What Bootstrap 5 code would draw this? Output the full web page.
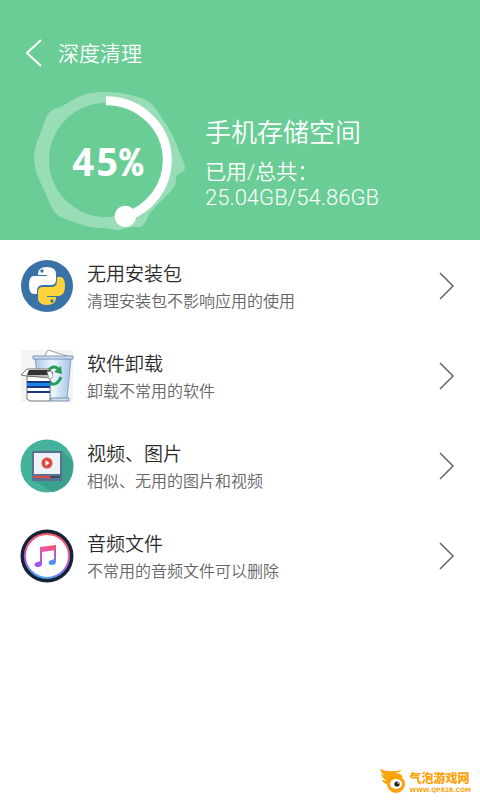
<!DOCTYPE html>
<html lang="zh-CN">
<head>
<meta charset="utf-8">
<meta name="viewport" content="width=device-width, initial-scale=1">
<title>深度清理</title>
<link href="https://cdn.jsdelivr.net/npm/bootstrap@5.3.0/dist/css/bootstrap.min.css" rel="stylesheet">
<style>
body{font-family:Roboto,"Noto Sans CJK SC",sans-serif;background:#fff;color:#2a2a2a}
.hero{background:#69cd95;color:#fff;padding:32px 20px 0}
.back-btn{width:26px;height:40px;color:#fff}
.page-title{font-size:21px;line-height:40px;font-weight:350;padding:2px 0 0 12px}
.gauge{width:180px;height:160px;margin-top:6px}
.gauge text{font:700 120px "Noto Sans Mono","DejaVu Sans Mono",monospace}
.storage{padding:40px 0 0 5px;font-weight:350}
.storage h2{font-size:26px;line-height:38px;font-weight:350}
.storage p{font-size:21px;line-height:25px}
.storage .amount{font-size:22px;font-weight:300}
.tools{padding-top:1px}
.tool{height:90px;padding:0 25px 0 20px;color:#2a2a2a}
.tool-icon{width:54px;height:54px}
.tool-text{padding:4px 0 0 13px}
.tool-name{font-size:19px;line-height:27px;font-weight:350}
.tool-note{font-size:16px;line-height:27px;color:#666;font-weight:350}
.brand{padding:0 9px 6px 0;color:#fba40a}
.brand-name{font:900 12px/16px "Noto Sans CJK SC",sans-serif}
.brand-url{font:700 6px/8px "DejaVu Sans",sans-serif}
</style>
</head>
<body class="d-flex flex-column min-vh-100">
<header class="hero">
  <div class="d-flex align-items-center">
    <button class="back-btn btn p-0 border-0 d-flex align-items-center justify-content-end" type="button" aria-label="返回">
      <svg width="20" height="28" viewBox="0 0 20 28" fill="none" stroke="currentColor" stroke-width="2"><path d="M15 1 1 14 15 27"/></svg>
    </button>
    <h1 class="page-title mb-0">深度清理</h1>
  </div>
  <div class="d-flex">
    <svg class="gauge flex-shrink-0" viewBox="0 0 540 480" role="img" aria-label="45%">
      <path fill="#fff" fill-opacity=".32" fill-rule="evenodd" d="M255 36C300 36 350 46 378 60C408 76 420 107 434 127C459 164 470 190 477 215C484 231 495 249 495 265C492 280 469 281 467 293C466 303 471 308 463 320C446 344 414 367 390 400C377 420 373 443 355 441C335 437 315 447 294 450C274 450 266 443 240 444C204 445 176 430 144 420C121 412 108 405 98 387C86 365 75 336 65 315C51 289 43 259 42 232C43 204 51 185 59 165C71 137 74 106 94 92C109 83 124 82 137 73C177 45 207 37 255 36ZM258 69A171 171 0 1 0 258 411A171 171 0 1 0 258 69Z"/>
      <path d="M258 62A184 179 0 0 1 442 241A184 179 0 0 1 316 411" fill="none" stroke="#fff" stroke-width="27"/>
      <circle cx="316" cy="409" r="32" fill="#fff"/>
      <text x="262" y="287" text-anchor="middle" fill="#fff">45%</text>
    </svg>
    <div class="storage">
      <h2 class="mb-2">手机存储空间</h2>
      <p class="mb-0">已用/总共：<br><span class="amount">25.04GB/54.86GB</span></p>
    </div>
  </div>
</header>
<main class="tools flex-grow-1">
  <a href="#apk" class="tool d-flex align-items-center text-decoration-none">
    <svg class="tool-icon flex-shrink-0" viewBox="0 0 54 54">
      <circle cx="27" cy="27" r="26" fill="#3872a6"/>
      <path fill="#fff" d="M18 15q0-7 9-7t9 7v6q0 5-5 5h-8q-6 0-6 6v3h-3q-5 0-5-9t5-9h13v-1h-9z"/>
      <path fill="#ffd43b" d="M36 39q0 7-9 7t-9-7v-6q0-5 5-5h8q6 0 6-6v-4h3q5 0 5 9t-6 10H27v1h9z"/>
      <circle cx="22" cy="12" r="1.700" fill="#3872a6"/><circle cx="32" cy="42" r="1.700" fill="#3872a6"/>
    </svg>
    <span class="d-flex flex-column flex-grow-1 tool-text"><span class="tool-name">无用安装包</span><span class="tool-note">清理安装包不影响应用的使用</span></span>
    <svg width="16" height="28" viewBox="0 0 16 28" fill="none" stroke="#666" stroke-width="1.500" aria-hidden="true"><path d="M1 1 14 14 1 27"/></svg>
  </a>
  <a href="#uninstall" class="tool d-flex align-items-center text-decoration-none">
    <svg class="tool-icon flex-shrink-0" viewBox="0 0 54 54">
      <defs><linearGradient id="bin"><stop stop-color="#a9c9e6"/><stop offset=".5" stop-color="#edf6fd"/><stop offset="1" stop-color="#a5c3e6"/></linearGradient></defs>
      <path fill="#f4f4f4" d="M1 1h52v52H1z"/>
      <path fill="#fff" stroke="#888" stroke-width=".8" d="m24 8 4-7 19 6-2 4z"/>
      <path fill="url(#bin)" stroke="#7697c2" stroke-width=".8" d="M15 9h36l-4 41H20z"/>
      <path fill="#cbdff1" stroke="#637ea6" stroke-width=".8" d="M13 7h40v3H13zM31 49h18v3H31z"/>
      <path fill="none" stroke="#299d5b" stroke-width="3" d="M27 23q7-9 12-2M41 28q-4 10-12 6"/>
      <path fill="#299d5b" d="m34 23 8 2-1-8zm-6 6-1 9 7-3z"/>
      <path fill="#fff" stroke="#555" stroke-width=".8" d="m7 27-6-1 6-6h22l4 4-3 5zM7 27h23v25H10l-3-2z"/>
      <path fill="#333" d="m7 26 2-5h21l-2 5z"/>
      <path fill="#193a82" d="M7 32h23v7H7zM7 42h23v2H7z"/><path fill="#1785e9" d="M7 34h23v3H7z"/>
      <path fill="#fff" stroke="#777" stroke-width=".6" d="m27 22 5 1 1 5-4 2z"/>
    </svg>
    <span class="d-flex flex-column flex-grow-1 tool-text"><span class="tool-name">软件卸载</span><span class="tool-note">卸载不常用的软件</span></span>
    <svg width="16" height="28" viewBox="0 0 16 28" fill="none" stroke="#666" stroke-width="1.500" aria-hidden="true"><path d="M1 1 14 14 1 27"/></svg>
  </a>
  <a href="#media" class="tool d-flex align-items-center text-decoration-none">
    <svg class="tool-icon flex-shrink-0" viewBox="0 0 54 54">
      <circle cx="27" cy="27" r="26.500" fill="#43b19b"/>
      <path fill="#3aa08c" d="m42 12 11 11q2 24-20 30L13 41z"/>
      <path fill="#5c7191" d="M12 12h30v30H12z"/><path fill="#edf2f6" d="M14 14h26v21H14z"/>
      <circle cx="27" cy="24" r="5.500" fill="#df4b42"/><path fill="#fff" d="m25.500 21 4 3-4 3z"/>
      <path fill="#3d4d68" d="M14 37h26v2H14z"/><path fill="#df4b42" d="M14 37h15v2H14z"/><circle cx="29" cy="38" r="1.500" fill="#df4b42"/>
    </svg>
    <span class="d-flex flex-column flex-grow-1 tool-text"><span class="tool-name">视频、图片</span><span class="tool-note">相似、无用的图片和视频</span></span>
    <svg width="16" height="28" viewBox="0 0 16 28" fill="none" stroke="#666" stroke-width="1.500" aria-hidden="true"><path d="M1 1 14 14 1 27"/></svg>
  </a>
  <a href="#audio" class="tool d-flex align-items-center text-decoration-none">
    <svg class="tool-icon flex-shrink-0" viewBox="0 0 54 54">
      <defs>
        <linearGradient id="rim" x1=".6" y1="0" x2=".4" y2="1"><stop stop-color="#ff5964"/><stop offset=".35" stop-color="#f0649d"/><stop offset=".65" stop-color="#b45df2"/><stop offset="1" stop-color="#48a5fa"/></linearGradient>
        <linearGradient id="note" gradientUnits="userSpaceOnUse" x1="32" y1="16" x2="22" y2="38"><stop stop-color="#f9536b"/><stop offset=".45" stop-color="#d95ac2"/><stop offset="1" stop-color="#a050f5"/></linearGradient>
        <linearGradient id="stem" x1="0" y1="0" x2="0" y2="1"><stop stop-color="#f9536b"/><stop offset=".5" stop-color="#a45de8"/><stop offset="1" stop-color="#3aa4fa"/></linearGradient>
      </defs>
      <circle cx="27" cy="27" r="26.500" fill="#172334"/>
      <circle cx="27" cy="27" r="22" fill="#fff" stroke="url(#rim)" stroke-width="2"/>
      <path fill="url(#note)" d="M20 18 36 16v5l-14 2v12c0 2-2 3-4 3-5 0-4-5 0-5l2-1z"/>
      <path fill="url(#stem)" d="M34 16h2v17c0 2-2 3-4 3-5 0-4-5 0-5l2-1z"/>
    </svg>
    <span class="d-flex flex-column flex-grow-1 tool-text"><span class="tool-name">音频文件</span><span class="tool-note">不常用的音频文件可以删除</span></span>
    <svg width="16" height="28" viewBox="0 0 16 28" fill="none" stroke="#666" stroke-width="1.500" aria-hidden="true"><path d="M1 1 14 14 1 27"/></svg>
  </a>
</main>
<footer class="brand d-flex justify-content-end align-items-center gap-1">
  <svg width="26" height="25" viewBox="0 0 26 25" aria-hidden="true">
    <path fill="#fba40a" d="M0 0q8 4 22 1-3 3-8 3 7 0 9 4l-9 2-7 5q-4-1-5-4l5 1q-5-3-6-7l6 3Q1 5 0 0z"/>
    <ellipse cx="16" cy="15" rx="9" ry="9" fill="#fba40a"/><ellipse cx="16" cy="15" rx="6" ry="5" fill="#fff"/><circle cx="17" cy="15" r="2.600" fill="#222"/><circle cx="18" cy="14" r=".8" fill="#fff"/>
  </svg>
  <div><div class="brand-name">气泡游戏网</div><div class="brand-url">WWW.QP828.COM</div></div>
</footer>
<script src="https://cdn.jsdelivr.net/npm/bootstrap@5.3.0/dist/js/bootstrap.bundle.min.js"></script>
</body>
</html>
